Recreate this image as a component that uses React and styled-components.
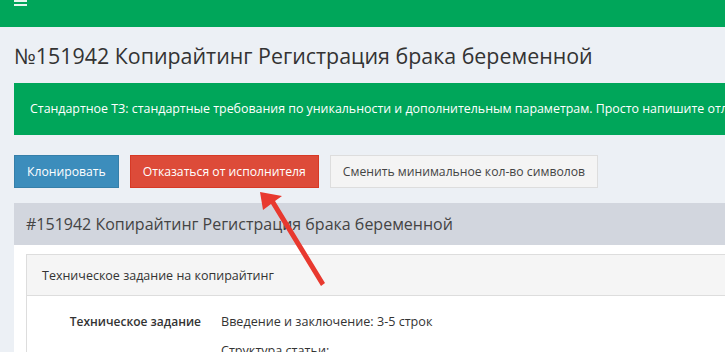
import React from 'react';
import styled, { createGlobalStyle } from 'styled-components';

const GlobalStyle = createGlobalStyle`
  html, body {
    margin: 0;
    padding: 0;
    background: #ecf0f5;
    overflow: hidden;
  }
  body {
    font-family: "Open Sans", "Liberation Sans", sans-serif;
    color: #333;
  }
`;

const TopBar = styled.header`
  height: 27px;
  background: #00a65a;
  display: flex;
  align-items: flex-start;
  padding-left: 14px;
`;

const Burger = styled.button`
  border: 0;
  padding: 0;
  background: transparent;
  width: 13px;
  display: flex;
  flex-direction: column;
  gap: 2px;

  span {
    display: block;
    height: 2px;
    background: #e8f6ee;
  }
`;

const Content = styled.main`
  width: 1100px;
  padding: 0 14px;
`;

const PageTitle = styled.h1`
  margin: 15px 0 0;
  font-size: 21.4px;
  font-weight: 400;
  line-height: 28px;
  color: #333;
  white-space: nowrap;
`;

const Callout = styled.div`
  margin-top: 13px;
  background: #00a65a;
  color: #fff;
  font-size: 12.4px;
  line-height: 20px;
  padding: 16px 16px;
  white-space: nowrap;
`;

const ButtonRow = styled.div`
  display: flex;
  gap: 11px;
  margin-top: 20px;
`;

const colors = {
  primary: { bg: '#3c8dbc', border: '#367fa9', fg: '#fff' },
  danger: { bg: '#dd4b39', border: '#d73925', fg: '#fff' },
  default: { bg: '#f4f4f4', border: '#ddd', fg: '#444' },
};

const Button = styled.button`
  height: 33px;
  padding: 0 12px;
  font-family: inherit;
  font-size: 12.2px;
  border: 1px solid ${({ $variant }) => colors[$variant].border};
  background: ${({ $variant }) => colors[$variant].bg};
  color: ${({ $variant }) => colors[$variant].fg};
  border-radius: 0;
  cursor: pointer;
`;

const Box = styled.section`
  margin-top: 15px;
  background: #fff;
`;

const BoxHeader = styled.div`
  height: 42px;
  background: #d2d6de;
  display: flex;
  align-items: center;
  padding: 0 12px;
`;

const BoxTitle = styled.h3`
  margin: 0;
  font-size: 16px;
  font-weight: 400;
  color: #444;
  white-space: nowrap;
`;

const BoxBody = styled.div`
  padding: 9px 12px 0;
`;

const Panel = styled.div`
  border: 1px solid #ddd;
  border-bottom: 0;
`;

const PanelHeading = styled.div`
  height: 40px;
  background: #f5f5f5;
  border-bottom: 1px solid #ddd;
  display: flex;
  align-items: center;
  padding: 0 15px;
  font-size: 12.5px;
  color: #333;
`;

const PanelBody = styled.div`
  padding: 16px 15px 0;
`;

const FieldRow = styled.div`
  display: grid;
  grid-template-columns: 159px 1fr;
  column-gap: 20px;
  font-size: 12.6px;
  line-height: 20px;
`;

const FieldLabel = styled.div`
  text-align: right;
  font-weight: 600;
  font-size: 12px;
  color: #333;
`;

const FieldValue = styled.div`
  color: #333;

  p {
    margin: 0 0 9px;
  }
`;

const Arrow = styled.svg`
  position: absolute;
  left: 0;
  top: 0;
  pointer-events: none;
`;

export default function App() {
  return (
    <>
      <GlobalStyle />
      <TopBar>
        <Burger aria-label="Меню">
          <span />
          <span />
        </Burger>
      </TopBar>
      <Content>
        <PageTitle>№151942 Копирайтинг Регистрация брака беременной</PageTitle>
        <Callout>
          Стандартное ТЗ: стандартные требования по уникальности и дополнительным параметрам. Просто напишите отличный текст по теме
        </Callout>
        <ButtonRow>
          <Button $variant="primary">Клонировать</Button>
          <Button $variant="danger">Отказаться от исполнителя</Button>
          <Button $variant="default">Сменить минимальное кол-во символов</Button>
        </ButtonRow>
        <Box>
          <BoxHeader>
            <BoxTitle>#151942 Копирайтинг Регистрация брака беременной</BoxTitle>
          </BoxHeader>
          <BoxBody>
            <Panel>
              <PanelHeading>Техническое задание на копирайтинг</PanelHeading>
              <PanelBody>
                <FieldRow>
                  <FieldLabel>Техническое задание</FieldLabel>
                  <FieldValue>
                    <p>Введение и заключение: 3-5 строк</p>
                    <p>Структура статьи:</p>
                  </FieldValue>
                </FieldRow>
              </PanelBody>
            </Panel>
          </BoxBody>
        </Box>
      </Content>
      <Arrow width="725" height="352" viewBox="0 0 725 352">
        <polygon
          fill="#e8392f"
          points="260,192 282,196 275,201 325,283 321,286 271,204 263,210"
        />
      </Arrow>
    </>
  );
}
